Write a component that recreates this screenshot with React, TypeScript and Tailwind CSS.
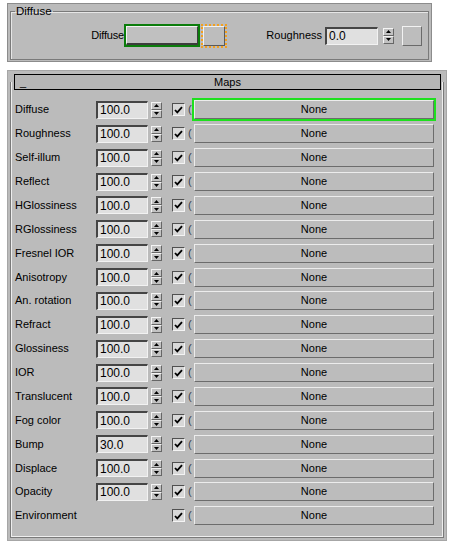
import React from "react";

const rows: [string, string | null][] = [
  ["Diffuse", "100.0"],
  ["Roughness", "100.0"],
  ["Self-illum", "100.0"],
  ["Reflect", "100.0"],
  ["HGlossiness", "100.0"],
  ["RGlossiness", "100.0"],
  ["Fresnel IOR", "100.0"],
  ["Anisotropy", "100.0"],
  ["An. rotation", "100.0"],
  ["Refract", "100.0"],
  ["Glossiness", "100.0"],
  ["IOR", "100.0"],
  ["Translucent", "100.0"],
  ["Fog color", "100.0"],
  ["Bump", "30.0"],
  ["Displace", "100.0"],
  ["Opacity", "100.0"],
  ["Environment", null],
];

function Spinner() {
  return (
    <div className="flex flex-col w-[11px] h-[16px]">
      <div className="flex-1 flex items-center justify-center bg-[#c2c2c2] border-t border-l border-t-[#f4f4f4] border-l-[#f4f4f4] border-b border-r border-b-[#666] border-r-[#666]">
        <svg width="5" height="3" viewBox="0 0 5 3">
          <path d="M2.5 0L5 3H0z" fill="#000" />
        </svg>
      </div>
      <div className="flex-1 flex items-center justify-center bg-[#c2c2c2] border-t border-l border-t-[#f4f4f4] border-l-[#f4f4f4] border-b border-r border-b-[#666] border-r-[#666]">
        <svg width="5" height="3" viewBox="0 0 5 3">
          <path d="M0 0H5L2.5 3z" fill="#000" />
        </svg>
      </div>
    </div>
  );
}

function NumInput({ value, w }: { value: string; w: string }) {
  return (
    <div
      className={`${w} h-[18px] bg-[#e0e0e0] border-t-2 border-l-2 border-t-[#454545] border-l-[#454545] border-b border-r border-b-[#f2f2f2] border-r-[#f2f2f2] flex items-center pl-[2px] text-[12px] leading-[14px] text-black`}
    >
      {value}
    </div>
  );
}

function CheckBox() {
  return (
    <div className="w-[13px] h-[13px] bg-[#d8d8d8] border-t border-l border-t-[#505050] border-l-[#505050] border-b border-r border-b-[#f4f4f4] border-r-[#f4f4f4] flex items-center justify-center">
      <svg width="9" height="8" viewBox="0 0 9 8">
        <path d="M1 4L3.3 6.4L8 1.2" stroke="#000" strokeWidth="1.8" fill="none" />
      </svg>
    </div>
  );
}

export default function App() {
  return (
    <div className="w-[455px] h-[546px] bg-white font-['Liberation_Sans',Arial,sans-serif] text-[11px] leading-[13px] text-black pt-[3px] pl-[7px]">
      {/* Top panel */}
      <div className="w-[425px] h-[59px] bg-[#bbbbbb] border border-[#8c8c8c] pl-[2px] pt-[1px]">
        <fieldset className="w-[419px] h-[55px] border border-[#7a7a7a] shadow-[inset_1px_1px_0_#e6e6e6]">
          <legend className="ml-[4px] px-[1px] leading-[13px] text-[11.5px]">Diffuse</legend>
          <div className="flex items-center h-[23px] mt-[6px]">
            <div className="w-[113px] text-right text-[11px] tracking-[-0.2px]">Diffuse</div>
            <div className="w-[76px] h-[23px] border-2 border-[#0b7d0b] flex">
              <div className="flex-1 bg-[#c0c0c0] border-t border-l border-t-[#f2f2f2] border-l-[#f2f2f2] border-b-2 border-r border-b-[#3c3c3c] border-r-[#3c3c3c]" />
            </div>
            <div className="ml-[1px] w-[26px] h-[24px] border-2 border-dotted border-[#f2a020] flex">
              <div className="flex-1 bg-[#bdbdbd] border-t border-l border-t-[#f2f2f2] border-l-[#f2f2f2] border-b border-r border-b-[#5a5a5a] border-r-[#5a5a5a]" />
            </div>
            <div className="w-[95px] text-right">Roughness</div>
            <div className="ml-[3px]">
              <NumInput value="0.0" w="w-[53px]" />
            </div>
            <div className="ml-[5px]">
              <Spinner />
            </div>
            <div className="ml-[8px] w-[20px] h-[20px] bg-[#bdbdbd] border-t border-l border-t-[#f2f2f2] border-l-[#f2f2f2] border-b border-r border-b-[#6a6a6a] border-r-[#6a6a6a]" />
          </div>
        </fieldset>
      </div>

      {/* Maps panel */}
      <div className="mt-[8px] w-[440px] h-[471px] bg-[#bbbbbb] border border-[#a6a6a6] flex flex-col">
        <div className="relative z-10 mt-[3px] ml-[6px] w-[427px] h-[16px] border border-black bg-[#b6b6b6] grid grid-cols-[1fr_auto_1fr] items-center">
          <div className="pl-[5px] leading-[10px] self-end pb-[2px]">_</div>
          <div className="text-center">Maps</div>
          <div />
        </div>
        <div className="-mt-[8px] ml-[2px] w-[434px] h-[456px] border-l border-r border-b border-[#7a7a7a] shadow-[inset_1px_0_0_#eeeeee,inset_-1px_-1px_0_#eeeeee] pt-[16px]">
          {rows.map(([label, val], i) => (
            <div key={label} className="flex items-center h-[23.88px]">
              <div className="w-[85px] pl-[4px] whitespace-nowrap">{label}</div>
              {val !== null ? (
                <>
                  <NumInput value={val} w="w-[52px]" />
                  <div className="ml-[3px]">
                    <Spinner />
                  </div>
                </>
              ) : (
                <div className="w-[66px]" />
              )}
              <div className="ml-[10px]">
                <CheckBox />
              </div>
              <div className="w-[9px] pl-[3px] text-[#3a4250] overflow-hidden">(</div>
              <div
                className={`w-[240px] h-[19px] bg-[#bcbcbc] border-t border-l border-t-[#ececec] border-l-[#ececec] border-b border-r border-b-[#6c6c6c] border-r-[#6c6c6c] flex items-center justify-center ${
                  i === 0 ? "outline-2 outline-[#1ee01e]" : ""
                }`}
              >
                None
              </div>
            </div>
          ))}
        </div>
      </div>
    </div>
  );
}
